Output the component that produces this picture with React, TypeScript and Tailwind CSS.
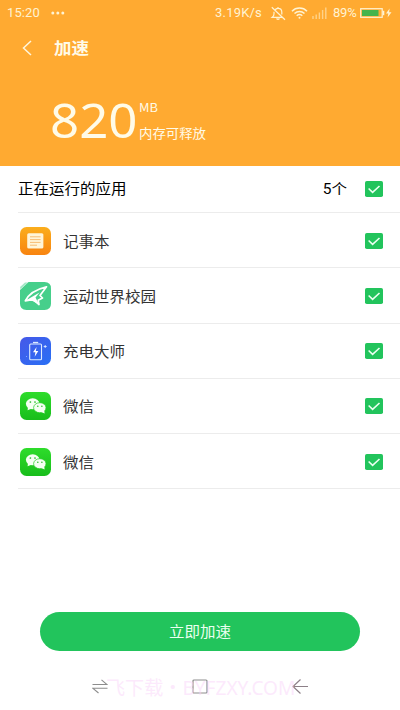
import { useState } from "react";
import type { ReactNode } from "react";

type RunningApp = {
  id: number;
  name: string;
  icon: ReactNode;
};

function NotesIcon() {
  return (
    <svg width="31" height="28" viewBox="0 0 31 28">
      <defs>
        <linearGradient id="notes" x1="0" y1="0" x2="0" y2="1">
          <stop offset="0" stopColor="#fbae1c" />
          <stop offset="1" stopColor="#f88410" />
        </linearGradient>
      </defs>
      <rect width="31" height="28" rx="6.5" fill="url(#notes)" />
      <rect x="7.5" y="7" width="16" height="15.5" rx="1.5" fill="#ef7f0c" opacity="0.5" />
      <rect x="7.2" y="6.2" width="16.2" height="15.3" rx="1.5" fill="#fff5d8" />
      <path
        d="M10 9.8h10.6M10 12.6h10.6M10 15.4h10.6M10 18.2h7"
        stroke="#f6b766"
        strokeWidth="0.9"
      />
    </svg>
  );
}

function CampusIcon() {
  return (
    <svg width="31" height="28" viewBox="0 0 31 28">
      <path
        d="M8.5 0H24.5Q31 0 31 6.5V21.5Q31 28 24.5 28H6.5Q0 28 0 21.5V8Z"
        fill="#46cf8b"
      />
      <path d="M0 5L5 0.5H8L0.5 7.2Z" fill="#a5e8c8" />
      <path
        d="M26.5 4.8C17 7 9 11.5 5.3 18.8L13.5 17.5L19 22.5L18.2 18.3L22.5 16L20 13.5Z"
        fill="none"
        stroke="#fff"
        strokeWidth="1.7"
        strokeLinejoin="round"
      />
      <path d="M5.3 18.8L19.5 10.5L15.5 15.5L19 22.5L12.5 19Z" fill="#fff" />
    </svg>
  );
}

function ChargeIcon() {
  return (
    <svg width="31" height="28" viewBox="0 0 31 28">
      <defs>
        <linearGradient id="charge" x1="0" y1="0" x2="1" y2="1">
          <stop offset="0" stopColor="#4658e8" />
          <stop offset="1" stopColor="#2970f5" />
        </linearGradient>
      </defs>
      <rect width="31" height="28" rx="6.5" fill="url(#charge)" />
      <rect x="9.7" y="7" width="11.8" height="15.8" rx="1" fill="none" stroke="#dcebff" strokeWidth="1.1" />
      <path d="M13 5.5H18.2" stroke="#dcebff" strokeWidth="1.3" />
      <path d="M16.6 10L13 15.3H15.4L14.7 19.7L18.3 14H15.8Z" fill="#fff" />
      <path d="M25.2 8V11M23.7 9.5H26.7" stroke="#dcebff" strokeWidth="0.9" />
      <circle cx="6.5" cy="19.5" r="0.5" fill="#9fbcff" />
    </svg>
  );
}

function WechatIcon() {
  return (
    <svg width="31" height="28" viewBox="0 0 31 28">
      <defs>
        <linearGradient id="wechat" x1="0" y1="0" x2="0" y2="1">
          <stop offset="0" stopColor="#2edc2b" />
          <stop offset="1" stopColor="#18bd1b" />
        </linearGradient>
      </defs>
      <rect width="31" height="28" rx="6.5" fill="url(#wechat)" />
      <ellipse cx="12.7" cy="11.8" rx="6.8" ry="5.5" fill="#f5fff3" />
      <path d="M8 14.5L7.6 18.3L12 16.5Z" fill="#f5fff3" />
      <ellipse cx="19.8" cy="15.7" rx="6.2" ry="5" fill="#f5fff3" stroke="#23cc23" strokeWidth="0.7" />
      <path d="M20.5 19.8L24.6 21.5L24.2 18Z" fill="#f5fff3" />
      <circle cx="10.4" cy="10" r="0.85" fill="#23b923" />
      <circle cx="15" cy="10" r="0.85" fill="#23b923" />
      <circle cx="17.8" cy="14.3" r="0.75" fill="#23b923" />
      <circle cx="21.9" cy="14.3" r="0.75" fill="#23b923" />
    </svg>
  );
}

const apps: RunningApp[] = [
  { id: 1, name: "记事本", icon: <NotesIcon /> },
  { id: 2, name: "运动世界校园", icon: <CampusIcon /> },
  { id: 3, name: "充电大师", icon: <ChargeIcon /> },
  { id: 4, name: "微信", icon: <WechatIcon /> },
  { id: 5, name: "微信", icon: <WechatIcon /> },
];

type CheckProps = {
  checked: boolean;
  label: string;
  onChange: () => void;
};

function Check({ checked, label, onChange }: CheckProps) {
  return (
    <button type="button" role="checkbox" aria-checked={checked} aria-label={label} onClick={onChange}>
      <svg className="block" width="18" height="16" viewBox="0 0 18 16">
        <rect width="18" height="16" rx="1.8" fill={checked ? "#22c45c" : "#d4d4d4"} />
        {checked && (
          <path d="M3.6 7.5L7.6 11.3L14.5 5" fill="none" stroke="#eafff0" strokeWidth="1.6" />
        )}
      </svg>
    </button>
  );
}

function StatusBar() {
  return (
    <div className="flex h-[26px] items-center pr-[8px] pl-[7px] font-['Roboto','Noto_Sans_CJK_SC',sans-serif] text-[13px] text-[#fff3d2]">
      <span className="w-[44px] scale-y-[0.92] tracking-[0.1px]">15:20</span>
      <svg width="14" height="4" viewBox="0 0 14 4" fill="#fff3d2">
        <circle cx="1.8" cy="2" r="1.5" />
        <circle cx="6.8" cy="2" r="1.5" />
        <circle cx="11.8" cy="2" r="1.5" />
      </svg>
      <span className="ml-auto w-[55px] scale-y-[0.92] tracking-[0.2px] whitespace-nowrap">3.19K/s</span>
      <svg width="17" height="15" viewBox="0 0 17 15" fill="none" stroke="#fff3d2" strokeWidth="1.2">
        <path d="M5 4.2C5.5 3 6.6 2.3 8 2.3C10.4 2.3 11.8 4 11.8 6V8.5M12.5 11.3H2.3C3.400 10.5 4 9.3 4 8V5.800M8 2.3V1M6.5 12.5Q8 14 9.5 12.5M1.8 1.3L15 13.7" />
      </svg>
      <svg className="ml-[4px]" width="17" height="14" viewBox="0 0 17 14" fill="none" stroke="#fff3d2" strokeWidth="1.5">
        <path d="M1 5.2C5 1 12 1 16 5.2M3.5 7.5C6.3 4.8 10.7 4.8 13.5 7.5M5.7 9.8C7.5 8.2 9.5 8.2 11.3 9.8" />
        <circle cx="8.5" cy="11.7" r="1" fill="#fff3d2" stroke="none" />
      </svg>
      <svg className="ml-[4px]" width="15" height="12" viewBox="0 0 15 12" stroke="#ffdda0" strokeWidth="1.4">
        <path d="M1 12V9M4.2 12V7.5M7.4 12V5.5M10.6 12V3M13.8 12V0.5" opacity="0.8" />
      </svg>
      <span className="ml-[6px] w-[27px] scale-y-[0.92] tracking-[-0.2px]">89%</span>
      <svg width="32" height="10" viewBox="0 0 32 10">
        <rect x="0.7" y="0.7" width="21.5" height="8.6" fill="none" stroke="#fff3d2" strokeWidth="1.2" />
        <rect x="2" y="2" width="16.5" height="6" fill="#45b44c" />
        <path d="M23.5 2.8V7.2" stroke="#fff3d2" strokeWidth="1.6" />
        <path d="M29.6 0.5L26 5.6H28.3L27.6 9.5L31.5 4.2H29.1Z" fill="#fff3d2" />
      </svg>
    </div>
  );
}

export default function App() {
  const [selected, setSelected] = useState<number[]>(apps.map((app) => app.id));
  const allSelected = selected.length === apps.length;

  const toggle = (id: number) => {
    setSelected((current) =>
      current.includes(id) ? current.filter((item) => item !== id) : [...current, id],
    );
  };

  return (
    <main className="relative flex h-[710px] w-[400px] flex-col overflow-hidden bg-white font-['Noto_Sans','Noto_Sans_CJK_SC',sans-serif]">
      <header className="h-[166px] bg-[#ffaa31] text-[#fffbe8]">
        <StatusBar />
        <div className="flex h-[43px] items-center pl-[22px]">
          <button type="button" aria-label="返回">
            <svg width="10" height="16" viewBox="0 0 10 16" fill="none" stroke="#fff6dc" strokeWidth="1.5">
              <path d="M9 1L1.5 8L9 15" />
            </svg>
          </button>
          <h1 className="ml-[22px] scale-y-[0.92] font-['Noto_Sans_CJK_SC',sans-serif] text-[17.5px] leading-6 font-bold">
            加速
          </h1>
        </div>
        <div className="flex pt-[25px] pl-[50px]">
          <span className="w-[89px] scale-y-[0.93] text-[51px] leading-[50px]">820</span>
          <div className="flex flex-col font-['Noto_Sans_CJK_SC',sans-serif] text-[13.4px]">
            <span className="mt-[5px] scale-y-[0.92] text-[12.9px] leading-4">MB</span>
            <span className="mt-[9px] scale-y-[0.94] leading-4">内存可释放</span>
          </div>
        </div>
      </header>

      <section className="text-[15.5px] text-[#333]">
        <div className="ml-[18px] flex h-[47px] items-center border-b border-[#ececec] pr-[17px] text-black">
          <h2 className="scale-y-[0.92] pt-[2px]">正在运行的应用</h2>
          <span className="mr-[18px] ml-auto scale-y-[0.92] pt-[2px] font-['Roboto','Noto_Sans_CJK_SC',sans-serif]">
            {selected.length}个
          </span>
          <Check
            checked={allSelected}
            label="全选"
            onChange={() => setSelected(allSelected ? [] : apps.map((app) => app.id))}
          />
        </div>
        <ul>
          {apps.map((app) => (
            <li
              key={app.id}
              className="ml-[18px] flex h-[55.25px] items-center border-b border-[#ececec] pt-px pr-[17px] pl-[2px]"
            >
              {app.icon}
              <span className="mr-auto ml-[12px] scale-y-[0.92] pt-px">{app.name}</span>
              <Check
                checked={selected.includes(app.id)}
                label={app.name}
                onChange={() => toggle(app.id)}
              />
            </li>
          ))}
        </ul>
      </section>

      <footer className="mt-auto">
        <button
          type="button"
          className="mx-[40px] flex h-[39px] w-[320px] items-center justify-center rounded-full bg-[#22c45c] text-[15.5px] text-[#eafff0]"
        >
          <span className="scale-y-[0.92]">立即加速</span>
        </button>
        <nav className="flex h-[59px] items-center justify-between px-[92px] pt-[12px]">
          <svg width="16" height="15" viewBox="0 0 16 15" fill="none" stroke="#8d8d8d" strokeWidth="1.1">
            <path d="M0.5 5.5H15L9.5 0.8M15.5 9.3H1L6.5 14" />
          </svg>
          <svg width="16" height="15" viewBox="0 0 16 15" fill="none" stroke="#8d8d8d" strokeWidth="1.2">
            <rect x="1" y="1" width="14" height="13" rx="1" />
          </svg>
          <svg width="16" height="15" viewBox="0 0 16 15" fill="none" stroke="#8d8088" strokeWidth="1.2">
            <path d="M16 7.5H1M8.5 0.5L1 7.5L8.5 14.5" />
          </svg>
        </nav>
      </footer>

      <p className="pointer-events-none absolute top-[676px] left-[106px] text-[19.1px] leading-6 whitespace-nowrap text-[#f9d4f9]/50">
        飞下载・BYFZXY.COM
      </p>
    </main>
  );
}
